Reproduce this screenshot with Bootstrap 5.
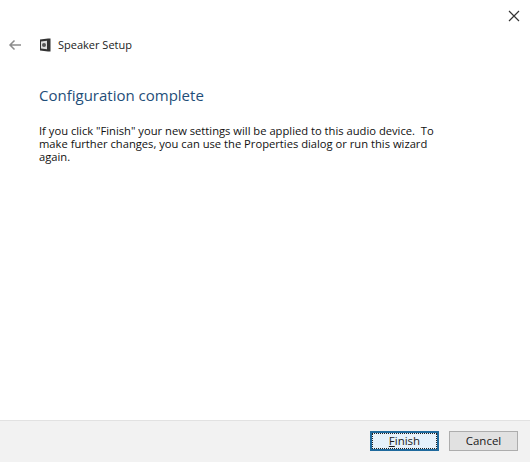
<!doctype html>
<html lang="en">
<head>
<meta charset="utf-8">
<title>Speaker Setup</title>
<link href="https://cdn.jsdelivr.net/npm/bootstrap@5.3.0/dist/css/bootstrap.min.css" rel="stylesheet">
<style>
html,body{height:100%}
body{width:530px;height:462px;overflow:hidden;background:#fff;font-family:"Open Sans","Noto Sans","DejaVu Sans",sans-serif;color:#111;font-size:11.2px}
.wiz{height:462px}
.closebar{height:28px;padding:3px 9px 0 0}
.plain-btn{background:none;border:0;padding:0;line-height:0}
.titlerow{height:34px;padding-left:8px;font-size:11px;color:#222}
.titletext{margin-left:7px}
.speaker{margin-left:17px}
.wizbody{padding:21px 39px 0}
.wizhead{font-size:15px;font-weight:400;color:#1f4e79;margin:0 0 17px;line-height:24px}
.wiztext{width:410px;line-height:13px;margin:0}
.wizfoot{height:42px;background:#f2f2f2;border-top:1px solid #e2e2e2;padding:0 12px 2px 0}
.wbtn{width:69px;height:20px;font-size:11.5px;line-height:18px;padding:0;border-radius:0;color:#1a1a1a;background:#e1e1e1;border:1px solid #adadad}
.wbtn-def{background:#e5f1fb;border:2px solid #1f6a9e;outline:1px dotted #222;outline-offset:-3px;line-height:16px}
.gapb{gap:10px}
</style>
</head>
<body>
<div class="wiz d-flex flex-column">
  <div class="closebar d-flex justify-content-end">
    <button class="plain-btn" type="button" aria-label="Close">
      <svg width="14" height="14" viewBox="0 0 14 14"><path d="M2 2l10 10M12 2L2 12" stroke="#333" stroke-width="1.2" fill="none"/></svg>
    </button>
  </div>
  <div class="titlerow d-flex align-items-center">
    <button class="plain-btn" type="button" aria-label="Back">
      <svg width="14" height="12" viewBox="0 0 14 12"><path d="M13 6H2M6.5 1.5L2 6l4.500 4.500" stroke="#8c8c8c" stroke-width="1.500" fill="none"/></svg>
    </button>
    <svg class="speaker" width="12" height="14" viewBox="0 0 12 14">
      <path d="M1 1.500L9 .5h2.500v13H9l-8-1z" fill="#333"/>
      <path d="M2 3.500l6-.7v8.400l-6-.7z" fill="#ddd"/>
      <circle cx="5" cy="7" r="2" fill="#555"/>
    </svg>
    <span class="titletext">Speaker Setup</span>
  </div>
  <div class="wizbody flex-grow-1">
    <h1 class="wizhead">Configuration complete</h1>
    <p class="wiztext">If you click "Finish" your new settings will be applied to this audio device.&nbsp; To make further changes, you can use the Properties dialog or run this wizard again.</p>
  </div>
  <div class="wizfoot d-flex justify-content-end align-items-center gapb">
    <button class="btn wbtn wbtn-def" type="button"><u>F</u>inish</button>
    <button class="btn wbtn" type="button">Cancel</button>
  </div>
</div>
<script src="https://cdn.jsdelivr.net/npm/bootstrap@5.3.0/dist/js/bootstrap.bundle.min.js"></script>
</body>
</html>
